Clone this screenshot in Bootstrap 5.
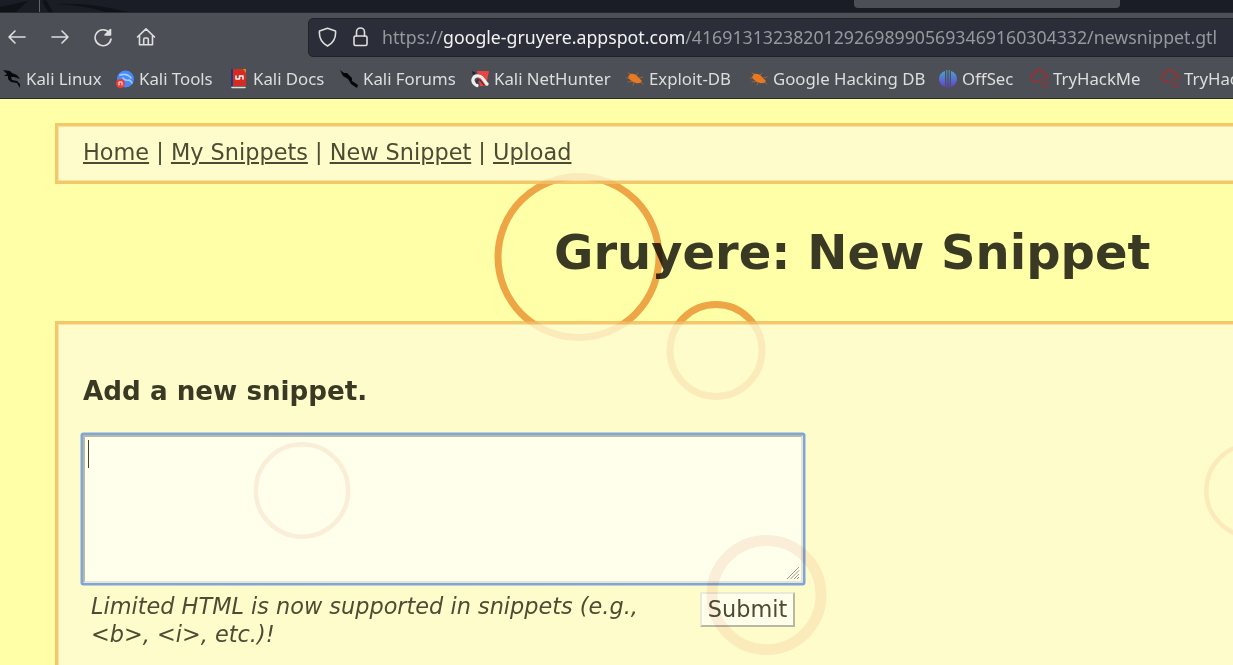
<!DOCTYPE html>
<html lang="en">
<head>
<meta charset="utf-8">
<title>Gruyere: New Snippet</title>
<link rel="stylesheet" href="https://cdn.jsdelivr.net/npm/bootstrap@5.3.0/dist/css/bootstrap.min.css">
<style>
body{background:#ffffa8;color:#4c4c34;font:22.4px/28px "DejaVu Sans",sans-serif;height:665px;overflow:hidden;position:relative}
.chrome{height:98.5px;background:#4c4f56;border-bottom:1px solid #292a31;font-family:"Noto Sans",sans-serif;color:#dededd;overflow:hidden}
.tabstrip{height:13px;background:#1a1d26;border-bottom:1px solid #25282e;padding-left:854px}
.active-tab{width:266px;height:8px;background:#4c4f56;border-radius:0 0 4px 4px}
.toolbar{height:48px}
.toolbar svg,.marks svg{fill:none;stroke:#dededd;stroke-width:1.6;stroke-linecap:round;stroke-linejoin:round;flex:none}
.navicons{width:308px;flex:none;padding-left:7px;gap:23px}
.urlbar{width:940px;flex:none;height:39px;background:#2b2d38;border:1px solid #20222a;border-radius:5px;font-size:17.73px;line-height:24px;color:#97989d;white-space:nowrap;padding-left:9px}
.urlbar b{font-weight:400;color:#f3f3f4}
.url-text{padding-left:5px}
.marks{display:grid;grid-template-columns:113px 114px 110px 131px 155px 124px 189px 91px 131px 120px;font-size:16.8px;line-height:24px;height:36px;padding-left:3px;white-space:nowrap;align-items:center}
.marks>div{display:flex;align-items:center;gap:5px}
.marks span{flex:none}
.panel{margin-left:55px;width:1220px;background:#fffccc;border:3px solid #f4c76b;box-shadow:inset 0 0 0 1px #f9e29d;padding-left:25px}
.menu-panel{margin-top:24.5px;height:61px;padding-top:12px}
.menu-panel a{color:#4c4c34;text-underline-offset:2px;text-decoration-thickness:1.5px}
h1{font-size:48px;line-height:60px;font-weight:700;color:#3a3a24;margin:38px 0 0 554px;height:99px;white-space:nowrap}
h2{font-size:26.2px;line-height:30px;font-weight:700;color:#3a3a24;margin:0}
.entry-panel{height:352px;border-bottom:0;padding-top:52px}
.snippet-box{display:block;width:720px;height:148px;margin:29px 0 0 0;background:#ffffec;border:2px solid;border-color:#b9b9a0 #e5e5d2 #e5e5d2 #b9b9a0;border-radius:1px;outline:2px solid #7ea5dc;box-shadow:0 0 0 2.5px #7ea5dc;padding:3px;position:relative}
.caret{width:1px;height:28px;background:#44443a;margin-left:0}
.grip{position:absolute;right:1px;bottom:1px}
.note{width:570px;flex:none;padding:9px 0 0 8px;font-style:italic;white-space:nowrap}
.send{width:95px;height:35px;margin:9px 0 0 47px;background:#ffffec;border:2px solid;border-color:#eaead8 #b9b9a0 #b9b9a0 #eaead8;color:#4c4c34;padding:0;line-height:29px}
.rings{position:absolute;left:0;top:0;mix-blend-mode:multiply;pointer-events:none;fill:none}
</style>
</head>
<body>
<header class="chrome">
  <div class="tabstrip position-relative">
    <svg class="position-absolute start-0 top-0" width="150" height="12"><path d="M0 7L28 1 16 12H0M54 4Q90 2 128 12H105Q85 5 54 4M42 1L48 12H53L46 0" fill="#101218"/><path d="M39.5 0V12" stroke="#666"/></svg>
    <div class="active-tab"></div>
  </div>
  <div class="toolbar d-flex align-items-center">
    <div class="navicons d-flex align-items-center">
      <svg width="20" height="20"><path d="M18 10H2M8 4L2 10L8 16"/></svg>
      <svg width="20" height="20"><path d="M2 10H18M12 4L18 10L12 16"/></svg>
      <svg width="20" height="20"><path d="M16.2 5.5A8 8 0 1 0 18 12"/><path d="M17.5 2.5V8H12Z" fill="#dededd"/></svg>
      <svg width="20" height="20"><path d="M1.5 10L10 1.8L18.5 10M3.5 8.5V17.7H16.5V8.5M7.7 17V12.5Q7.7 11 9 11H11Q12.3 11 12.3 12.5V17"/></svg>
    </div>
    <div class="urlbar d-flex align-items-center">
      <svg width="19" height="20"><path d="M9.5 1.2L17.5 4Q18.500 14 9.500 19Q.5 14 1.500 4Z"/></svg>
      <svg width="16" height="20" class="ms-3"><rect x="1" y="9" width="13" height="9.500" rx="1.500"/><path d="M3.500 9V5A4 4 0 0 1 11.500 5V9"/></svg>
      <span class="url-text ms-2">https://<b>google-gruyere.appspot.com</b>/416913132382012926989905693469160304332/newsnippet.gtl</span>
    </div>
  </div>
  <nav class="marks">
    <div><svg width="18" height="18"><path d="M0 0L7 1 9 3 14 5 17 9 11 7 8 7 9 10 14 11 17 14 17 18 14 13 8 12 5 9 5 6 1 6 4 4Z" fill="#08090b" stroke="none"/></svg><span>Kali Linux</span></div>
    <div><svg width="18" height="18"><circle cx="9.500" cy="9" r="8.500" fill="#468bfa" stroke="none"/><path d="M4 5Q11 3 15 8M7 8Q9 11 13 10Q15 11 16 13" stroke="#a9ccff"/><circle cx="4.500" cy="13.500" r="4.500" fill="#ef3b35" stroke="none"/><path d="M3 15V12H6V15" stroke="#fff" stroke-width="1"/></svg><span>Kali Tools</span></div>
    <div><svg width="18" height="20"><path d="M1 0H4V17H1" fill="#20397a" stroke="none"/><path d="M3 0H16V17H3" fill="#d52b20" stroke="none"/><path d="M13 0H16V4Z" fill="#d28b24" stroke="none"/><path d="M2 18.500H15"/><path d="M6 7V10H9.500V7H13V10" stroke="#fff" stroke-width="1.500"/></svg><span>Kali Docs</span></div>
    <div><svg width="18" height="18"><path d="M0 0L4 3 7 3 12 8 12 11 18 15 17 18 11 14 8 9 3 6Z" fill="#050607" stroke="none"/></svg><span>Kali Forums</span></div>
    <div><svg width="18" height="18"><path d="M6 1H18L15 16H9Z" fill="#e74442" stroke="none"/><path d="M1 1L5 3L2 5Z" fill="#222" stroke="none"/><path d="M6 15.500C-1 12 2 5 8 6C12 6.500 13 11 16 14" stroke="#eee" stroke-width="3.200"/><path d="M6 13.500Q5 9 9 10L13 15" stroke="#3a2930" stroke-width="1.200"/></svg><span>Kali NetHunter</span></div>
    <div><svg width="18" height="18"><use href="#beetle"/></svg><span>Exploit-DB</span></div>
    <div><svg width="18" height="18"><use href="#beetle"/></svg><span>Google Hacking DB</span></div>
    <div><svg width="18" height="19"><g stroke="none" fill="url(#offsec)"><path d="M6 1Q0 3 0 9Q0 14 6 17ZM12 1Q18 3 18 9Q18 14 12 17ZM7.300 0H8.300V18L7.300 17ZM9.700 0H10.700V17L9.700 19Z"/></g></svg><span>OffSec</span></div>
    <div><svg width="18" height="20"><use href="#cloud"/></svg><span>TryHackMe</span></div>
    <div><svg width="18" height="20"><use href="#cloud"/></svg><span>TryHackMe</span></div>
  </nav>
</header>
<nav class="panel menu-panel"><a href="#">Home</a> | <a href="#">My Snippets</a> | <a href="#">New Snippet</a> | <a href="#">Upload</a></nav>
<h1><span>Gruyere: New Snippet</span></h1>
<main class="panel entry-panel">
  <h2><span>Add a new snippet.</span></h2>
  <div class="snippet-box" role="textbox"><div class="caret"></div>
    <svg class="grip" width="13" height="13" stroke="#99998a"><path d="M0 12L12 0M3.500 12L12 3.500M7 12L12 7M10 12L12 10"/></svg></div>
  <div class="d-flex align-items-start">
    <div class="note">Limited HTML is now supported in snippets (e.g.,<br>&lt;b&gt;, &lt;i&gt;, etc.)!</div>
    <button class="send" type="button">Submit</button>
  </div>
</main>
<svg class="rings" width="1233" height="665">
  <defs>
    <clipPath id="band"><rect y="184" width="1233" height="137.500"/></clipPath>
    <clipPath id="boxes"><path d="M0 99H1233V184H0ZM0 321.500H1233V665H0Z"/></clipPath>
    <g id="pair"><circle cx="578.500" cy="257" r="80.500"/><circle cx="716" cy="350.500" r="46"/></g>
    <linearGradient id="offsec" x2="0" y2="1"><stop stop-color="#48a9c6"/><stop offset="1" stop-color="#6536dc"/></linearGradient>
    <g id="beetle" stroke="#b2692d" stroke-width=".8"><path d="M2 3L8 6M0 8H7M2 12L8 11M10 5L12 3M13 8L17 7M14 12L17 14M8 12L7 15"/><path d="M4 4Q9 3 12 7L16 11Q14 14 10 13Q4 11 2 7Z" fill="#e87920" stroke="none"/></g>
    <g id="cloud" stroke="#a82d2b" stroke-width="1.400"><path d="M8 12H4Q0 11 1 7Q2 5 4 5Q5 1 9 1Q14 1 14 5Q18 5 17 9"/><path d="M11 10H14M16 11H18M10 14H12M14 14H18M11 17H14M16 18H18" stroke-width="1.200"/></g>
  </defs>
  <g clip-path="url(#band)" stroke="#eea569" stroke-width="7"><use href="#pair"/></g>
  <g clip-path="url(#boxes)" stroke="#fbeeea" stroke-width="7"><use href="#pair"/></g>
  <g stroke="#fbeeea"><circle cx="302" cy="490.500" r="46.200" stroke-width="4.500"/><circle cx="1252.500" cy="490.500" r="46.200" stroke-width="4.500"/><circle cx="766.500" cy="595" r="54.500" stroke-width="11"/></g>
</svg>
<script src="https://cdn.jsdelivr.net/npm/bootstrap@5.3.0/dist/js/bootstrap.bundle.min.js"></script>
</body>
</html>
